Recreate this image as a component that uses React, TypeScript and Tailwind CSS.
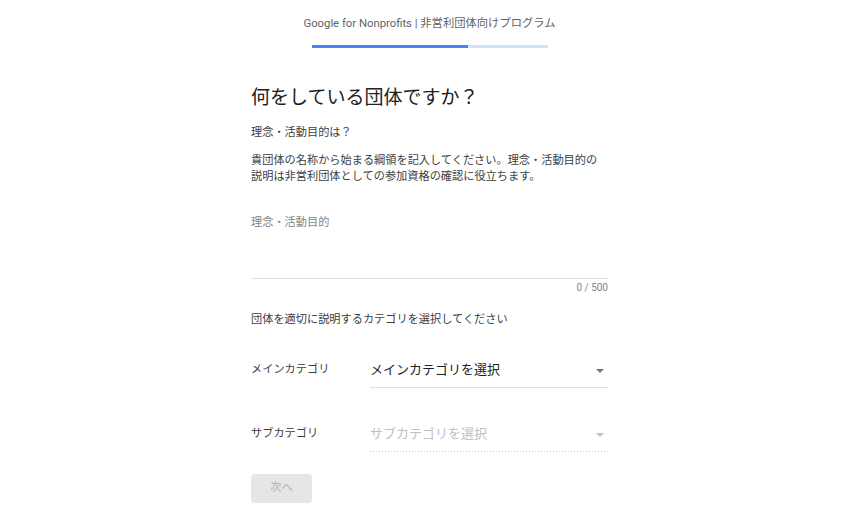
import React from "react";

const font = { fontFamily: 'Roboto, "Noto Sans CJK JP", sans-serif' };

function Arrow({ color }: { color: string }) {
  return (
    <svg width="8" height="4" viewBox="0 0 8 4" className="absolute right-[4px] top-[9px]">
      <path d="M0 0 L8 0 L4 4 Z" fill={color} />
    </svg>
  );
}

export default function App() {
  return (
    <div className="w-[850px] h-[512px] bg-white overflow-hidden font-['Roboto','Noto_Sans_CJK_JP',sans-serif]" style={font}>
      <div className="flex flex-col items-center pl-[9px]">
        <div className="mt-[16px] text-[11.3px] leading-[16px] text-[#5f6368]">
          Google for Nonprofits | 非営利団体向けプログラム
        </div>
        <div className="mt-[13px] flex h-[3px] w-[236px]">
          <div className="w-[156px] bg-[#4285f4]" />
          <div className="flex-1 bg-[#d2e3fc]" />
        </div>
        <div className="w-[357px]">
          <h1 className="mt-[36px] text-[19px] leading-[28px] text-[#202124] font-normal">
            何をしている団体ですか？
          </h1>
          <div className="mt-[13px] text-[11.2px] leading-[16px] text-[#3c4043]">理念・活動目的は？</div>
          <p className="mt-[12px] text-[11.2px] leading-[16px] text-[#3c4043]">
            貴団体の名称から始まる綱領を記入してください。理念・活動目的の説明は非営利団体としての参加資格の確認に役立ちます。
          </p>
          <div className="mt-[30px] h-[64px] border-b border-[#e0e0e0]">
            <div className="text-[11.2px] leading-[16px] text-[#80868b]">理念・活動目的</div>
          </div>
          <div className="mt-[2px] text-right text-[10px] leading-[14px] text-[#80868b]">0 / 500</div>
          <div className="mt-[17px] text-[11.2px] leading-[16px] text-[#3c4043]">
            団体を適切に説明するカテゴリを選択してください
          </div>
          <div className="mt-[32px] flex">
            <div className="w-[119px] text-[11.2px] leading-[20px] text-[#3c4043]">メインカテゴリ</div>
            <div className="relative flex-1 border-b border-[#e0e0e0] pb-[7px]">
              <div className="text-[13px] leading-[20px] text-[#202124]">メインカテゴリを選択</div>
              <Arrow color="#757575" />
            </div>
          </div>
          <div className="mt-[36px] flex">
            <div className="w-[119px] text-[11.2px] leading-[20px] text-[#3c4043]">サブカテゴリ</div>
            <div className="relative flex-1">
              <div className="pb-[7px] text-[13px] leading-[20px] text-[#bdc1c6]">サブカテゴリを選択</div>
              <div className="h-[1px] bg-[linear-gradient(to_right,#c8c8c8_34%,transparent_0%)] bg-[length:3px_1px] bg-repeat-x" />
              <Arrow color="#c4c4c4" />
            </div>
          </div>
          <button className="mt-[22px] h-[29px] w-[61px] rounded-[4px] bg-[#e6e6e6] text-[11.2px] text-[#b0b0b0]">
            次へ
          </button>
        </div>
      </div>
    </div>
  );
}
